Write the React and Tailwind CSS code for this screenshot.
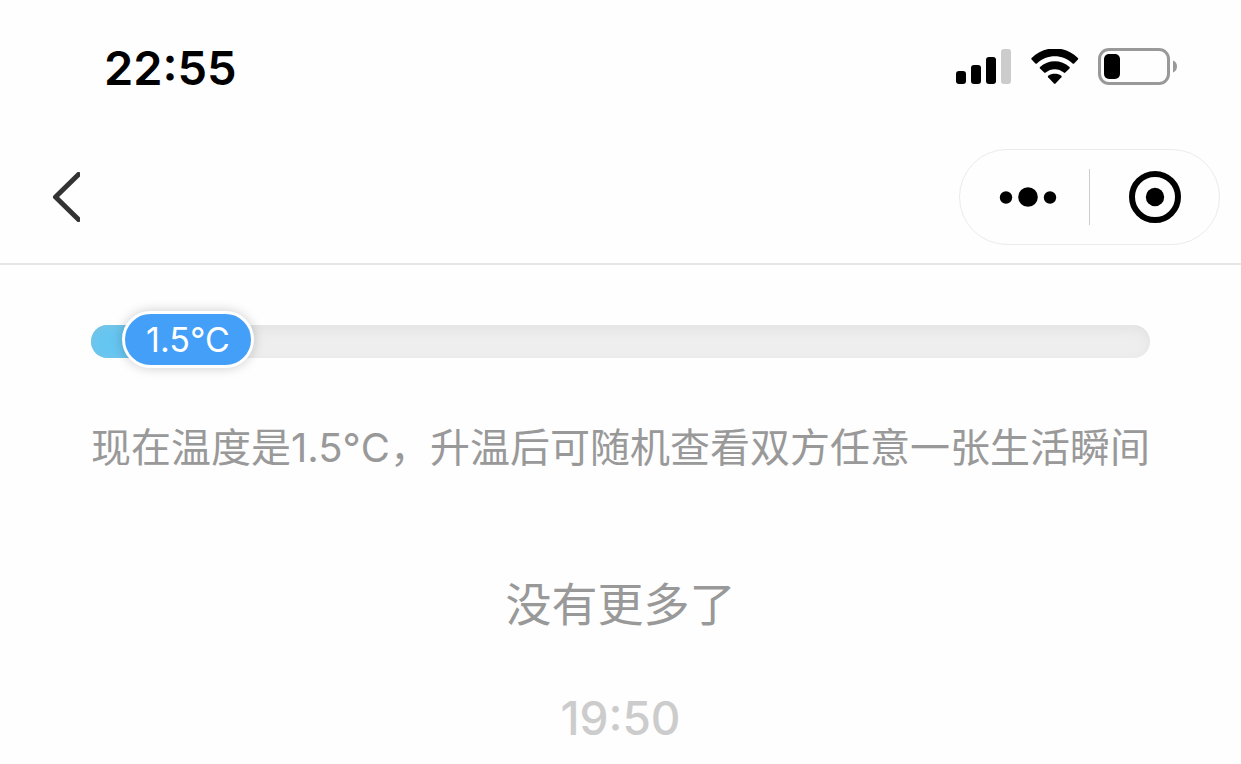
import React from "react";

const TEMPERATURE = 1.5;

function SignalIcon() {
  return (
    <svg width="56" height="36" viewBox="0 0 56 36" aria-label="信号">
      <rect x="0" y="22" width="10" height="13" rx="3" />
      <rect x="15" y="16" width="10" height="19" rx="3" />
      <rect x="30" y="8" width="10" height="27" rx="3" />
      <rect x="45" y="0" width="10" height="35" rx="3" fill="#cccccc" />
    </svg>
  );
}

function WifiIcon() {
  return (
    <svg width="48" height="36" viewBox="0 0 48 36" aria-label="Wi-Fi">
      <path d="M0.6 9C13.4-3.9 34.1-3.9 46.900 9Q47.500 9.700 46.900 10.400L43.100 14.400Q42.400 15 41.600 14.400C31.300 5 16.200 5 5.900 14.400Q5.100 15 4.400 14.400L0.600 10.400Q0 9.700 0.600 9Z" />
      <path d="M9 18C17.200 10.400 30.300 10.400 38.500 18Q39.200 18.700 38.500 19.400L34.300 23.600Q33.600 24.200 32.800 23.600C27.600 19 19.900 19 14.700 23.600Q13.900 24.200 13.200 23.600L9 19.400Q8.300 18.700 9 18Z" />
      <path d="M17.200 26.800C21 24.200 26.500 24.200 30.300 26.800Q31.100 27.500 30.400 28.300L24.500 34.600Q23.750 35.200 23 34.600L17.100 28.300Q16.400 27.500 17.200 26.800Z" />
    </svg>
  );
}

function BatteryIcon() {
  return (
    <svg width="80" height="38" viewBox="0 0 80 38" aria-label="电池">
      <rect x="1.5" y="1.5" width="69" height="34" rx="9.5" fill="none" stroke="#999999" strokeWidth="3" />
      <rect x="6" y="6" width="16" height="25" rx="5" />
      <path d="M75 12.5C77.6 13.3 79 15.7 79 18.5S77.6 23.7 75 24.5Z" fill="#999999" />
    </svg>
  );
}

function StatusBar() {
  return (
    <div className="flex h-[134px] items-center justify-between pr-[63px] pl-[104px]">
      <time className="text-[47px] leading-none font-semibold">22:55</time>
      <div className="flex items-center gap-[19px]">
        <SignalIcon />
        <WifiIcon />
        <BatteryIcon />
      </div>
    </div>
  );
}

function NavBar() {
  return (
    <nav className="flex items-start justify-between border-b-2 border-[#e6e6e6] pt-[15px] pr-[21px] pb-[18px] pl-[50px]">
      <button type="button" aria-label="返回" className="flex h-24 items-center">
        <svg width="30" height="50" viewBox="0 0 30 50" fill="none" stroke="#333333" strokeWidth="5">
          <path d="M28.5 2.5L5.5 25L28.5 47.5" strokeLinecap="round" strokeLinejoin="round" />
        </svg>
      </button>
      <div className="grid h-24 w-[261px] grid-cols-[1fr_1px_1fr] items-center rounded-full border border-[#ebebeb]">
        <button type="button" aria-label="更多" className="flex h-full items-center justify-center pl-1.5">
          <svg width="58" height="20" viewBox="0 0 58 20">
            <circle cx="7" cy="10.5" r="6.2" />
            <circle cx="29" cy="10" r="9.8" />
            <circle cx="51" cy="10.5" r="6.2" />
          </svg>
        </button>
        <span className="h-14 w-px bg-[#cccccc]" />
        <button type="button" aria-label="关闭" className="flex h-full items-center justify-center">
          <svg width="52" height="52" viewBox="0 0 52 52">
            <circle cx="26" cy="26" r="23" fill="none" stroke="#000000" strokeWidth="6" />
            <circle cx="26" cy="26" r="9.2" />
          </svg>
        </button>
      </div>
    </nav>
  );
}

function TemperatureBar({ value }) {
  return (
    <div className="flex h-[33px] items-center rounded-full bg-[#eeeeee] shadow-[inset_0_4px_12px_#e2e2e2]">
      <div className="h-full w-16 rounded-l-full bg-[#66c6f2] shadow-[inset_0_2px_10px_#78c4e2]" />
      <div className="relative mb-1 -ml-[33px] flex h-[57px] w-[132px] items-center justify-center rounded-full border-[3px] border-white bg-[#449ff9] text-[34px] leading-none text-white shadow-[0_0_12px_rgba(0,0,0,0.2)]">
        {value}°C
      </div>
    </div>
  );
}

export default function App() {
  return (
    <div className="min-h-screen bg-[#fefefe] font-['Inter','Noto_Sans_CJK_SC',sans-serif] text-black">
      <StatusBar />
      <NavBar />
      <main className="flex flex-col pt-[60px] text-center text-[#999999]">
        <div className="px-[91px]">
          <TemperatureBar value={TEMPERATURE} />
        </div>
        <p className="mt-[60px] text-[40px] leading-[60px] whitespace-nowrap">
          现在温度是{TEMPERATURE}°C，升温后可随机查看双方任意一张生活瞬间
        </p>
        <p className="mt-[92px] text-[46px] leading-[68px]">没有更多了</p>
        <time className="mt-[46px] text-[46px] leading-[68px] font-medium text-[#cccccc]">19:50</time>
      </main>
    </div>
  );
}
